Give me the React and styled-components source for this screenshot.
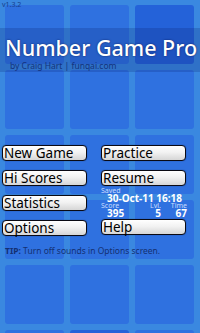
import React from "react";
import styled, { createGlobalStyle } from "styled-components";

const Global = createGlobalStyle`
  html, body { margin: 0; padding: 0; }
  body { width: 200px; height: 333px; overflow: hidden; background: #3a88e0; }
`;

const Screen = styled.div`
  position: relative;
  width: 200px;
  height: 333px;
  overflow: hidden;
  background: #3a88e0;
  font-family: "Noto Sans", "Open Sans", sans-serif;
`;

const TileLayer = styled.div`
  position: absolute;
  inset: 0;
  display: grid;
  grid-template-columns: repeat(3, 59px);
  grid-auto-rows: 59px;
  gap: 6px;
  padding: 5px;
`;

const Tile = styled.div`
  border-radius: 3px;
  background: ${(p) => (p.$dark ? "#2462d9" : "#2f71e0")};
`;

const Content = styled.div`
  position: relative;
  display: flex;
  flex-direction: column;
`;

const Version = styled.div`
  font-size: 7px;
  line-height: 8px;
  color: #173f8c;
  padding: 1px 0 0 2px;
  height: 19px;
  box-sizing: border-box;
`;

const TitleBand = styled.div`
  margin-top: 9px;
  height: 44px;
  background: rgba(10, 30, 110, 0.22);
  display: flex;
  flex-direction: column;
  padding: 9px 0 0 5px;
  box-sizing: border-box;
`;

const Title = styled.div`
  font-size: 21.5px;
  font-weight: 500;
  line-height: 22px;
  color: #ffffff;
  white-space: nowrap;
  text-shadow: 0 0 2px rgba(0, 10, 60, 0.7);
`;

const Byline = styled.div`
  font-size: 8.5px;
  line-height: 10px;
  color: #14337e;
  padding-left: 5px;
  margin-top: 2px;
  white-space: nowrap;
`;

const Menu = styled.div`
  display: flex;
  gap: 14px;
  padding: 0 0 0 2px;
  margin-top: 73px;
`;

const Column = styled.div`
  display: flex;
  flex-direction: column;
  gap: 9px;
  width: 85px;
`;

const Button = styled.div`
  height: 16px;
  box-sizing: border-box;
  border: 1.5px solid #0a0a14;
  border-radius: 4px;
  background: linear-gradient(#ffffff, #f2f2f2 45%, #d6d6d6);
  box-shadow: 0 0 1px rgba(0, 0, 40, 0.6);
  font-size: 13.5px;
  line-height: 14px;
  color: #000;
  padding-left: 1px;
  white-space: nowrap;
`;

const Saved = styled.div`
  height: 33px;
  margin: -9px 0;
  display: flex;
  flex-direction: column;
  color: #fff;
  padding-top: 2px;
  box-sizing: border-box;
`;

const Label = styled.div`
  font-size: 7px;
  line-height: 6px;
  color: #c8ddff;
`;

const SavedDate = styled.div`
  font-size: 10px;
  line-height: 9px;
  font-weight: 700;
  padding-left: 6px;
  white-space: nowrap;
`;

const Stats = styled.div`
  display: grid;
  grid-template-columns: 22px 38px 26px;
  justify-items: end;
`;

const Stat = styled.div`
  display: flex;
  flex-direction: column;
  align-items: ${(p) => (p.$first ? "flex-start" : "flex-end")};
  width: ${(p) => (p.$first ? "22px" : "auto")};
`;

const Value = styled.div`
  font-size: 10px;
  line-height: 8px;
  font-weight: 700;
  color: #fff;
  padding-left: ${(p) => (p.$indent ? "6px" : "0")};
`;

const Tip = styled.div`
  margin-top: 10px;
  padding-left: 5px;
  font-size: 8.5px;
  line-height: 10px;
  color: #143072;
  white-space: nowrap;
  b { font-weight: 700; }
`;

const darkTiles = new Set([2, 16]);

export default function App() {
  return (
    <Screen>
      <Global />
      <TileLayer>
        {Array.from({ length: 18 }, (_, i) => (
          <Tile key={i} $dark={darkTiles.has(i)} />
        ))}
      </TileLayer>
      <Content>
        <Version>v1.3.2</Version>
        <TitleBand>
          <Title>Number Game Pro</Title>
          <Byline>by Craig Hart | funqai.com</Byline>
        </TitleBand>
        <Menu>
          <Column>
            <Button>New Game</Button>
            <Button>Hi Scores</Button>
            <Button>Statistics</Button>
            <Button>Options</Button>
          </Column>
          <Column>
            <Button>Practice</Button>
            <Button>Resume</Button>
            <Saved>
              <Label>Saved</Label>
              <SavedDate>30-Oct-11 16:18</SavedDate>
              <Stats>
                <Stat $first>
                  <Label>Score</Label>
                  <Value $indent>395</Value>
                </Stat>
                <Stat>
                  <Label>Lvl.</Label>
                  <Value>5</Value>
                </Stat>
                <Stat>
                  <Label>Time</Label>
                  <Value>67</Value>
                </Stat>
              </Stats>
            </Saved>
            <Button>Help</Button>
          </Column>
        </Menu>
        <Tip>
          <b>TIP:</b> Turn off sounds in Options screen.
        </Tip>
      </Content>
    </Screen>
  );
}
